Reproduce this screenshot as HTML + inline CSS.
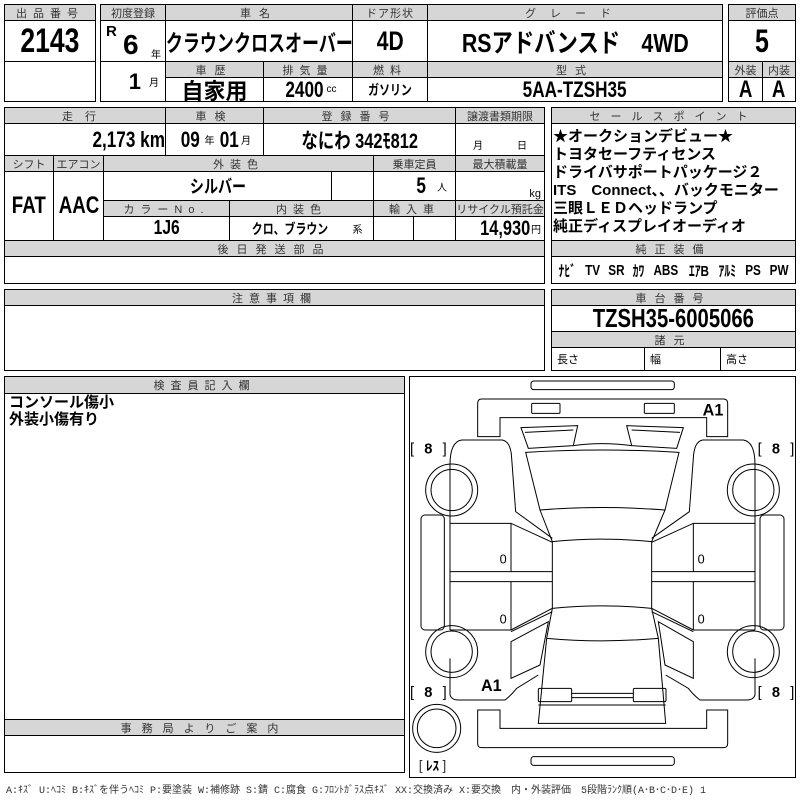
<!DOCTYPE html>
<html><head><meta charset="utf-8"><style>
body{margin:0;width:800px;height:800px;background:#fff;position:relative;overflow:hidden;font-family:"Liberation Sans","Noto Sans CJK JP",sans-serif;color:#000}
.c{position:absolute;border:1px solid #000;box-sizing:border-box;display:flex;align-items:center;justify-content:center;white-space:nowrap;overflow:hidden}
.h{background:#d6d6d6;color:#333;font-size:11px;letter-spacing:3px}
.v{font-family:"Liberation Sans","Noto Sans CJK JP",sans-serif;font-weight:bold}
.j{font-family:"Liberation Sans","Noto Sans CJK JP",sans-serif;font-weight:bold}
.s{font-size:10px;font-weight:normal;margin-left:3px}
.n{display:inline-block;transform:scaleX(.78)}
</style></head><body>
<!-- box1 -->
<div class="c h" style="left:4px;top:4px;width:92px;height:17px;letter-spacing:6px">出品番号</div>
<div class="c v" style="left:4px;top:20px;width:92px;height:42px;font-size:34px"><span class="n">2143</span></div>
<div class="c" style="left:4px;top:61px;width:92px;height:41px"></div>
<!-- box2 -->
<div class="c h" style="left:100px;top:4px;width:66px;height:17px;letter-spacing:0">初度登録</div>
<div class="c h" style="left:165px;top:4px;width:188px;height:17px;letter-spacing:8px">車名</div>
<div class="c h" style="left:352px;top:4px;width:76px;height:17px;letter-spacing:1px">ドア形状</div>
<div class="c h" style="left:427px;top:4px;width:296px;height:17px;letter-spacing:14px">グレード</div>
<div class="c" style="left:100px;top:20px;width:66px;height:42px"><span class="v" style="position:absolute;left:5px;top:2px;font-size:15px">R</span><span class="v" style="position:absolute;left:22px;top:8px;font-size:28px">6</span><span style="position:absolute;right:4px;bottom:0;font-size:10px">年</span></div>
<div class="c" style="left:100px;top:61px;width:66px;height:41px;justify-content:flex-end;padding-right:6px"><span class="v" style="font-size:22px">1</span><span class="s" style="margin-left:8px">月</span></div>
<div class="c j" style="left:165px;top:20px;width:188px;height:42px;font-size:23px"><span class="n" style="transform:scaleX(.74)">クラウンクロスオーバー</span></div>
<div class="c v" style="left:352px;top:20px;width:76px;height:42px;font-size:27px"><span class="n">4D</span></div>
<div class="c j" style="left:427px;top:20px;width:296px;height:42px;font-size:26px"><span class="n" style="transform:scaleX(.82)">RSアドバンスド　4WD</span></div>
<div class="c h" style="left:165px;top:61px;width:99px;height:17px;letter-spacing:8px">車歴</div>
<div class="c h" style="left:263px;top:61px;width:90px;height:17px;letter-spacing:6px">排気量</div>
<div class="c h" style="left:352px;top:61px;width:76px;height:17px;letter-spacing:6px">燃料</div>
<div class="c h" style="left:427px;top:61px;width:296px;height:17px;letter-spacing:8px">型式</div>
<div class="c j" style="left:165px;top:77px;width:99px;height:25px;font-size:22px">自家用</div>
<div class="c v" style="left:263px;top:77px;width:90px;height:25px;font-size:22px"><span class="n">2400</span><span class="s" style="margin-left:-2px">cc</span></div>
<div class="c j" style="left:352px;top:77px;width:76px;height:25px;font-size:14px"><span class="n">ガソリン</span></div>
<div class="c v" style="left:427px;top:77px;width:296px;height:25px;font-size:22px"><span class="n">5AA-TZSH35</span></div>
<!-- box3 -->
<div class="c h" style="left:728px;top:4px;width:68px;height:17px;letter-spacing:0">評価点</div>
<div class="c v" style="left:728px;top:20px;width:68px;height:42px;font-size:32px"><span class="n">5</span></div>
<div class="c h" style="left:728px;top:61px;width:35px;height:17px;letter-spacing:0">外装</div>
<div class="c h" style="left:762px;top:61px;width:34px;height:17px;letter-spacing:0">内装</div>
<div class="c v" style="left:728px;top:77px;width:35px;height:25px;font-size:24px"><span class="n">A</span></div>
<div class="c v" style="left:762px;top:77px;width:34px;height:25px;font-size:24px"><span class="n">A</span></div>
<!-- row2 -->
<div class="c h" style="left:4px;top:107px;width:162px;height:17px;letter-spacing:12px">走行</div>
<div class="c h" style="left:165px;top:107px;width:99px;height:17px;letter-spacing:8px">車検</div>
<div class="c h" style="left:263px;top:107px;width:193px;height:17px;letter-spacing:8px">登録番号</div>
<div class="c h" style="left:455px;top:107px;width:90px;height:17px;letter-spacing:0">譲渡書類期限</div>
<div class="c v" style="left:4px;top:123px;width:162px;height:33px;font-size:22px;justify-content:flex-end;padding-right:0"><span class="n" style="transform-origin:right">2,173 km</span></div>
<div class="c v" style="left:165px;top:123px;width:99px;height:33px;font-size:22px"><span class="n">09</span><span class="s" style="margin:0 2px">年</span><span class="n">01</span><span class="s" style="margin-left:0">月</span></div>
<div class="c j" style="left:263px;top:123px;width:193px;height:33px;font-size:21px"><span class="n">なにわ 342ﾓ812</span></div>
<div class="c" style="left:455px;top:123px;width:90px;height:33px;font-size:10px;justify-content:space-around;padding-top:10px"><span>月</span><span>日</span></div>
<!-- row3 -->
<div class="c h" style="left:4px;top:155px;width:50px;height:17px;letter-spacing:0">シフト</div>
<div class="c h" style="left:53px;top:155px;width:51px;height:17px;letter-spacing:0">エアコン</div>
<div class="c h" style="left:103px;top:155px;width:271px;height:17px;letter-spacing:6px">外装色</div>
<div class="c h" style="left:373px;top:155px;width:83px;height:17px;letter-spacing:0">乗車定員</div>
<div class="c h" style="left:455px;top:155px;width:90px;height:17px;letter-spacing:0">最大積載量</div>
<div class="c v" style="left:4px;top:171px;width:50px;height:70px;font-size:24px"><span class="n">FAT</span></div>
<div class="c v" style="left:53px;top:171px;width:51px;height:70px;font-size:24px"><span class="n">AAC</span></div>
<div class="c j" style="left:103px;top:171px;width:229px;height:30px;font-size:18px"><span class="n">シルバー</span></div>
<div class="c" style="left:331px;top:171px;width:43px;height:30px"></div>
<div class="c v" style="left:373px;top:171px;width:83px;height:30px;font-size:22px;justify-content:flex-end;padding-right:8px"><span class="n">5</span><span class="s" style="margin-left:10px">人</span></div>
<div class="c" style="left:455px;top:171px;width:90px;height:30px;font-size:11px;justify-content:flex-end;align-items:flex-end;padding-right:3px">kg</div>
<div class="c h" style="left:103px;top:200px;width:127px;height:17px;letter-spacing:6px">カラーNo.</div>
<div class="c h" style="left:229px;top:200px;width:145px;height:17px;letter-spacing:6px">内装色</div>
<div class="c h" style="left:373px;top:200px;width:83px;height:17px;letter-spacing:6px">輸入車</div>
<div class="c h" style="left:455px;top:200px;width:90px;height:17px;letter-spacing:0">リサイクル預託金</div>
<div class="c v" style="left:103px;top:216px;width:127px;height:25px;font-size:20px"><span class="n">1J6</span></div>
<div class="c j" style="left:229px;top:216px;width:145px;height:25px;font-size:14px"><span class="n">クロ、ブラウン</span><span class="s" style="margin-left:14px">系</span></div>
<div class="c" style="left:373px;top:216px;width:41px;height:25px"></div>
<div class="c" style="left:413px;top:216px;width:43px;height:25px"></div>
<div class="c v" style="left:455px;top:216px;width:90px;height:25px;font-size:21px;justify-content:flex-end;padding-right:3px"><span class="n" style="transform-origin:right">14,930</span><span class="s" style="margin-left:1px">円</span></div>
<div class="c h" style="left:4px;top:240px;width:541px;height:17px;letter-spacing:8px">後日発送部品</div>
<div class="c" style="left:4px;top:256px;width:541px;height:28px"></div>
<!-- sales -->
<div class="c h" style="left:551px;top:107px;width:245px;height:17px;letter-spacing:10px">セールスポイント</div>
<div class="c j" style="left:551px;top:123px;width:245px;height:118px;font-size:15px;line-height:18px;display:block;padding:4px 0 0 1px;white-space:pre">★オークションデビュー★
トヨタセーフティセンス
ドライバサポートパッケージ２
ITS　Connect、、バックモニター
三眼ＬＥＤヘッドランプ
純正ディスプレイオーディオ</div>
<div class="c h" style="left:551px;top:240px;width:245px;height:17px;letter-spacing:8px">純正装備</div>
<div class="c j" style="left:551px;top:256px;width:245px;height:28px;font-size:15px;justify-content:space-around;padding:0 2px"><span class="n">ﾅﾋﾞ</span><span class="n">TV</span><span class="n">SR</span><span class="n">ｶﾜ</span><span class="n">ABS</span><span class="n">ｴｱB</span><span class="n">ｱﾙﾐ</span><span class="n">PS</span><span class="n">PW</span></div>
<!-- notes -->
<div class="c h" style="left:4px;top:289px;width:541px;height:17px;letter-spacing:6px">注意事項欄</div>
<div class="c" style="left:4px;top:305px;width:541px;height:66px"></div>
<div class="c h" style="left:551px;top:289px;width:245px;height:17px;letter-spacing:8px">車台番号</div>
<div class="c v" style="left:551px;top:305px;width:245px;height:27px;font-size:26px"><span class="n">TZSH35-6005066</span></div>
<div class="c h" style="left:551px;top:331px;width:245px;height:17px;letter-spacing:8px">諸元</div>
<div class="c" style="left:551px;top:347px;width:94px;height:24px;font-size:11px;justify-content:flex-start;padding-left:5px">長さ</div>
<div class="c" style="left:644px;top:347px;width:77px;height:24px;font-size:11px;justify-content:flex-start;padding-left:5px">幅</div>
<div class="c" style="left:720px;top:347px;width:76px;height:24px;font-size:11px;justify-content:flex-start;padding-left:5px">高さ</div>
<!-- inspector -->
<div class="c h" style="left:4px;top:376px;width:401px;height:18px;letter-spacing:6px">検査員記入欄</div>
<div class="c j" style="left:4px;top:393px;width:401px;height:327px;font-size:15px;line-height:17px;display:block;padding:0 0 0 4px;white-space:pre">コンソール傷小
外装小傷有り</div>
<div class="c h" style="left:4px;top:719px;width:401px;height:17px;letter-spacing:10px">事務局よりご案内</div>
<div class="c" style="left:4px;top:735px;width:401px;height:38px"></div>
<div class="c" style="left:409px;top:376px;width:387px;height:402px"></div>
<svg style="position:absolute;left:405px;top:375px" width="395" height="425" viewBox="0 0 1185 1275" fill="none" stroke="#000" stroke-width="3">
<rect x="378" y="18" width="430" height="26" rx="8"/>
<path d="M230,72 H955 Q968,72 968,85 V185 H905 V128 H285 V185 H218 V85 Q218,72 230,72Z"/>
<rect x="380" y="85" width="85" height="30" rx="3"/><rect x="718" y="85" width="90" height="30" rx="3"/>
<path d="M348,158 L518,152 L505,212 L370,220Z M360,172 L505,165 M835,158 L665,152 L680,212 L815,220Z M825,172 L680,165"/>
<path d="M505,212 Q590,200 680,212"/>
<path d="M362,232 Q590,218 822,232 L780,405 Q590,390 405,405Z"/>
<path d="M405,405 L442,500 Q590,485 740,500 L780,405"/>
<path d="M442,500 V700 Q590,685 740,700 V500"/>
<path d="M442,700 L425,790 Q590,805 760,790 L740,700 M425,790 L400,1045 H782 L760,790 M400,990 H782"/>
<rect x="400" y="940" width="100" height="40" rx="4"/><rect x="685" y="940" width="98" height="40" rx="4"/>
<path d="M500,955 H685 M500,968 H685"/>
<path d="M135,440 V270 Q135,200 170,195 H292 Q318,200 320,250 L332,410 L442,490 M442,502 L318,445 H135 M135,440 V765 M135,590 H442 M135,620 H442 M318,445 V590 M318,620 V765 H135 M318,765 L442,700 M442,710 L318,770"/>
<path d="M1050,440 V270 Q1050,200 1015,195 H893 Q867,200 865,250 L853,410 L740,490 M740,502 L865,445 H1050 M1050,440 V765 M1050,590 H740 M1050,620 H740 M865,445 V590 M865,620 V765 H1050 M865,765 L740,700 M740,710 L865,770"/>
<path d="M318,800 L430,740 L405,870 L318,910Z M865,800 L760,740 L780,870 L865,910Z"/>
<path d="M135,850 V960 Q140,975 160,975 H300 Q320,960 335,940 L400,900 M1050,850 V960 Q1045,975 1025,975 H885 Q865,960 850,940 L782,900"/>
<path d="M230,1118 H955 Q968,1118 968,1105 V1005 H905 V1060 H285 V1005 H218 V1105 Q218,1118 230,1118Z"/>
<rect x="378" y="1145" width="430" height="26" rx="8"/>
<rect x="48" y="420" width="70" height="345" rx="12"/><rect x="1065" y="420" width="72" height="345" rx="12"/>
<circle cx="140" cy="345" r="78"/><circle cx="140" cy="345" r="62"/>
<circle cx="140" cy="830" r="78"/><circle cx="140" cy="830" r="62"/>
<circle cx="1045" cy="345" r="78"/><circle cx="1045" cy="345" r="62"/>
<circle cx="1045" cy="830" r="78"/><circle cx="1045" cy="830" r="62"/>
<circle cx="95" cy="1060" r="72"/><circle cx="95" cy="1060" r="58"/>
<g fill="#000" stroke="none" font-family="Liberation Sans,sans-serif" font-weight="bold">
<text x="893" y="122" font-size="50" textLength="62" lengthAdjust="spacingAndGlyphs">A1</text><text x="228" y="948" font-size="50" textLength="62" lengthAdjust="spacingAndGlyphs">A1</text>
<text x="15" y="236" font-size="44" font-weight="normal" textLength="110" lengthAdjust="spacing">[ <tspan font-weight="bold">8</tspan> ]</text>
<text x="1058" y="236" font-size="44" font-weight="normal" textLength="110" lengthAdjust="spacing">[ <tspan font-weight="bold">8</tspan> ]</text>
<text x="15" y="966" font-size="44" font-weight="normal" textLength="110" lengthAdjust="spacing">[ <tspan font-weight="bold">8</tspan> ]</text>
<text x="1058" y="966" font-size="44" font-weight="normal" textLength="110" lengthAdjust="spacing">[ <tspan font-weight="bold">8</tspan> ]</text>
<text x="40" y="1187" font-size="40" font-weight="normal" font-family="Noto Sans CJK JP,sans-serif">[ <tspan font-weight="bold">ﾚｽ</tspan> ]</text>
<text x="284" y="565" font-size="38" font-weight="normal">0</text><text x="284" y="745" font-size="38" font-weight="normal">0</text>
<text x="878" y="565" font-size="38" font-weight="normal">0</text><text x="878" y="745" font-size="38" font-weight="normal">0</text>
</g>
</svg>
<div style="position:absolute;left:6px;top:781px;font-size:10px;color:#333;white-space:nowrap;font-family:'Liberation Mono','Noto Sans CJK JP',monospace;letter-spacing:0">A:ｷｽﾞ U:ﾍｺﾐ B:ｷｽﾞを伴うﾍｺﾐ P:要塗装 W:補修跡 S:錆 C:腐食 G:ﾌﾛﾝﾄｶﾞﾗｽ点ｷｽﾞ XX:交換済み X:要交換　内・外装評価　5段階ﾗﾝｸ順(A･B･C･D･E) 1</div>
</body></html>
